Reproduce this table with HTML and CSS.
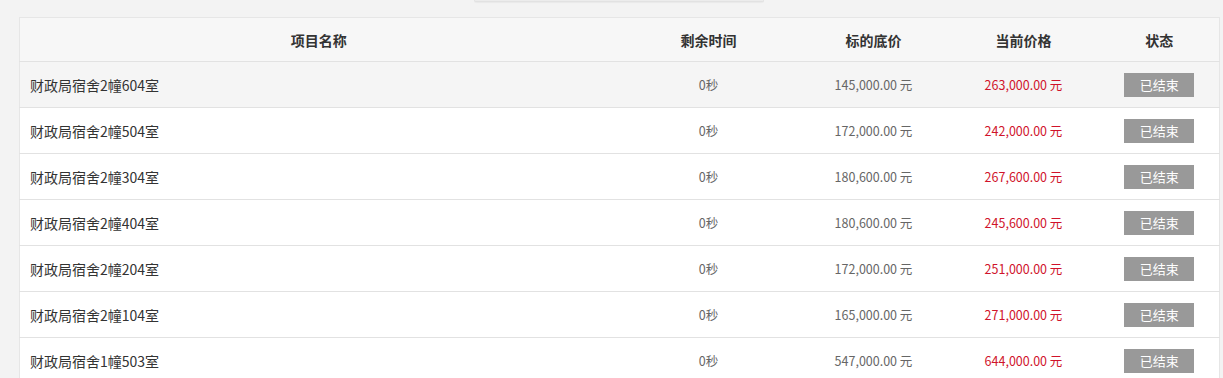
FILE: index.html
```html
<!DOCTYPE html>
<html lang="zh-CN">
<head>
<meta charset="utf-8">
<title>拍卖项目列表</title>
<link rel="stylesheet" href="styles.css">
</head>
<body>
<div class="page">
  <div class="top-strip"><div class="top-tab"></div></div>
  <table class="list">
    <colgroup>
      <col class="c-name"><col class="c-time"><col class="c-base"><col class="c-cur"><col class="c-state">
    </colgroup>
    <thead>
      <tr><th>项目名称</th><th>剩余时间</th><th>标的底价</th><th>当前价格</th><th>状态</th></tr>
    </thead>
    <tbody>
      <tr class="hover"><td class="name">财政局宿舍2幢604室</td><td>0秒</td><td>145,000.00 元</td><td class="price">263,000.00 元</td><td><span class="btn">已结束</span></td></tr>
      <tr><td class="name">财政局宿舍2幢504室</td><td>0秒</td><td>172,000.00 元</td><td class="price">242,000.00 元</td><td><span class="btn">已结束</span></td></tr>
      <tr><td class="name">财政局宿舍2幢304室</td><td>0秒</td><td>180,600.00 元</td><td class="price">267,600.00 元</td><td><span class="btn">已结束</span></td></tr>
      <tr><td class="name">财政局宿舍2幢404室</td><td>0秒</td><td>180,600.00 元</td><td class="price">245,600.00 元</td><td><span class="btn">已结束</span></td></tr>
      <tr><td class="name">财政局宿舍2幢204室</td><td>0秒</td><td>172,000.00 元</td><td class="price">251,000.00 元</td><td><span class="btn">已结束</span></td></tr>
      <tr><td class="name">财政局宿舍2幢104室</td><td>0秒</td><td>165,000.00 元</td><td class="price">271,000.00 元</td><td><span class="btn">已结束</span></td></tr>
      <tr><td class="name">财政局宿舍1幢503室</td><td>0秒</td><td>547,000.00 元</td><td class="price">644,000.00 元</td><td><span class="btn">已结束</span></td></tr>
    </tbody>
  </table>
</div>
</body>
</html>
```
FILE: styles.css
```css
html, body {
  margin: 0;
  padding: 0;
  background: #f3f3f3;
  font-family: "Noto Sans CJK SC", "Microsoft YaHei", sans-serif;
  overflow: hidden;
}
.page {
  padding-left: 19px;
  width: 1200px;
}
.top-strip {
  height: 17px;
  display: flex;
  justify-content: center;
}
.top-tab {
  width: 288px;
  height: 1px;
  border: 1px solid #e2e2e2;
  border-top: none;
  border-radius: 0 0 4px 4px;
  background: #ececec;
  box-shadow: 0 1px 1px rgba(0,0,0,0.04);
}
.list {
  width: 1200px;
  border-collapse: collapse;
  table-layout: fixed;
  background: #fff;
  border: 1px solid #e6e6e6;
}
.c-name { width: 598px; }
.c-time { width: 182px; }
.c-base { width: 148px; }
.c-cur { width: 152px; }
.c-state { width: 120px; }
.list th {
  height: 43px;
  padding: 0;
  background: #f7f7f7;
  color: #333;
  font-size: 14px;
  font-weight: bold;
  text-align: center;
  border-bottom: 1px solid #e2e2e2;
}
.list td {
  height: 45px;
  padding: 0;
  text-align: center;
  color: #666;
  font-size: 12.5px;
  border-bottom: 1px solid #e2e2e2;
}
.list tr.hover td { background: #f5f5f5; }
.list td.name {
  text-align: left;
  padding-left: 10px;
  color: #333;
  font-size: 14px;
}
.list td.price { color: #d0132b; }
.btn {
  display: inline-block;
  width: 70px;
  height: 24px;
  line-height: 24px;
  background: #999;
  color: #fff;
  font-size: 13px;
  text-align: center;
  vertical-align: middle;
}
```
